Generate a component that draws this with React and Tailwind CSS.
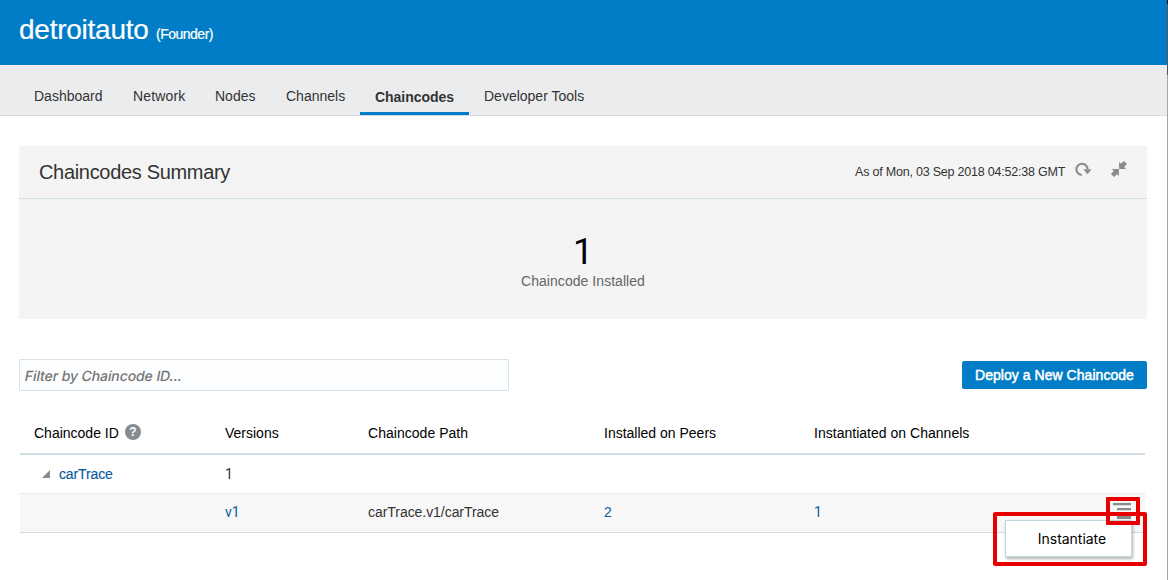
const tabs = [
  { label: "Dashboard", width: "w-[69px]" },
  { label: "Network", width: "w-[52px] tracking-[0.15px]" },
  { label: "Nodes", width: "w-[41px]" },
  { label: "Channels", width: "w-[59px]" },
  { label: "Chaincodes", width: "w-[79px]", active: true },
  { label: "Developer Tools", width: "w-[100px]" },
];

function Text({ children, className = "" }) {
  return <span className={`block whitespace-nowrap ${className}`}>{children}</span>;
}

function RefreshIcon() {
  return (
    <svg width="18" height="16" viewBox="0 0 18 16" className="block">
      <path d="M6.8 12.9 A5.6 5.6 0 1 1 12.6 7.5" fill="none" stroke="#868b8e" strokeWidth="2.1" />
      <path d="M8.3 7.3 H16.4 L12.5 12.2 Z" fill="#868b8e" />
    </svg>
  );
}

function CollapseIcon() {
  return (
    <svg width="16" height="16" viewBox="0 0 16 16" className="block" fill="#868b8e">
      <path d="M8.1 0.9 L10 2.8 L12.8 0 L16 3 L13.2 6 L15.1 7.9 H8.1 Z" />
      <path d="M0.9 8.1 H7.9 V15.1 L6 13.2 L3 16 L0 13 L2.8 10 Z" />
    </svg>
  );
}

const cols = "grid grid-cols-[205px_143px_236px_210px_1fr]";

export default function App() {
  return (
    <div className="relative h-[580px] w-[1168px] overflow-hidden bg-white font-['Liberation_Sans',Arial,sans-serif] text-[14px] text-[#333333]">
      <header className="flex h-[65px] items-baseline bg-[#007dc6] pl-[19px] pt-[11px] text-white">
        <h1 className="w-[137px] text-[28px] leading-[38px] tracking-[-0.25px] [-webkit-text-stroke:0.2px_white]">detroitauto</h1>
        <Text className="text-[14px] tracking-[-0.5px] [-webkit-text-stroke:0.2px_white]">(Founder)</Text>
      </header>
      <nav className="flex h-[51px] border-b border-[#d3dde3] bg-[#ebecee] pl-[19px]">
        {tabs.map((t) => (
          <a
            key={t.label}
            className={
              t.active
                ? "h-[50px] border-b-[3px] border-[#007dc6] px-[15px] pt-[24px] font-bold leading-[16px] tracking-[-0.03px]"
                : "h-[50px] px-[15px] pt-[23px] leading-[16px]"
            }
          >
            <Text className={t.width}>{t.label}</Text>
          </a>
        ))}
      </nav>

      <section className="ml-[19px] mt-[30px] h-[173px] w-[1128px] bg-[#f4f4f4]">
        <div className="flex h-[53px] items-start border-b border-[#cfdee7] pl-5">
          <h2 className="grow pt-[14px] text-[20px] leading-[24px] tracking-[-0.32px]">Chaincodes Summary</h2>
          <Text className="w-[220px] pt-[18px] text-[12.5px] leading-[16px] tracking-[-0.21px]">As of Mon, 03 Sep 2018 04:52:38 GMT</Text>
          <span className="w-[36px] pt-[16px]"><RefreshIcon /></span>
          <span className="mr-5 pt-[15px]"><CollapseIcon /></span>
        </div>
        <div className="flex flex-col items-center pt-[32px]">
          <div className="font-[Roboto,sans-serif] text-[36px] font-normal leading-[42px] text-black">1</div>
          <div className="text-[14px] leading-[16px] tracking-[0.05px] text-[#666666]">Chaincode Installed</div>
        </div>
      </section>

      <div className="ml-[19px] mt-[40px] flex h-8 w-[1128px] justify-between">
        <div className="h-8 w-[490px] rounded-[1px] border border-[#d9e4ea] bg-[#fcfdfe] pl-[5px] pt-[8px] font-[Inter,sans-serif] text-[14px] font-medium leading-[16px] text-[#757575]">
          <span className="inline-block -skew-x-[11deg] tracking-[-0.09px]">Filter by Chaincode ID...</span>
        </div>
        <button className="mt-[2px] h-7 w-[185px] rounded-[2px] bg-[#007dc6] text-[14px] leading-[16px] tracking-[0.04px] text-white [-webkit-text-stroke:0.5px_white]">
          Deploy a New Chaincode
        </button>
      </div>

      <div className="ml-[20px] mt-[25px] w-[1125px]">
        <div className={`${cols} h-[39px] border-b-2 border-[#d2dfe5] text-black`}>
          <div className="flex gap-[6px] pl-[14px] pt-[9px] leading-[16px]">
            <Text className="w-[85px]">Chaincode ID</Text>
            <span className="-mt-px flex h-4 w-4 items-center justify-center rounded-full bg-[#868b8e] text-[12px] font-bold leading-none text-white">?</span>
          </div>
          <Text className="pt-[9px] leading-[16px]">Versions</Text>
          <Text className="pt-[9px] leading-[16px] tracking-[0.03px]">Chaincode Path</Text>
          <Text className="pt-[9px] leading-[16px]">Installed on Peers</Text>
          <Text className="pt-[9px] leading-[16px] tracking-[0.02px]">Instantiated on Channels</Text>
        </div>
        <div className={`${cols} h-[39px] border-b border-[#e9ebec]`}>
          <div className="flex gap-[9px] pl-[22px] pt-[11px] leading-[16px] text-[#0b5a9d]">
            <svg width="8" height="8" viewBox="0 0 8 8" className="mt-1"><path d="M8 0V8H0Z" fill="#868b8e" /></svg>
            <Text className="tracking-[-0.13px] [-webkit-text-stroke:0.15px_#0b5a9d]">carTrace</Text>
          </div>
          <Text className="pt-[11px] font-[Roboto,sans-serif] leading-[16px]">1</Text>
        </div>
        <div className={`${cols} h-[39px] border-b border-[#cfdde4] bg-[#f7f7f7] leading-[16px] text-[#0b5a9d]`}>
          <span />
          <Text className="pt-[10px] font-[Roboto,sans-serif]">v1</Text>
          <Text className="pt-[10px] tracking-[-0.05px] text-[#333333]">carTrace.v1/carTrace</Text>
          <Text className="pt-[10px]">2</Text>
          <Text className="pt-[10px] font-[Roboto,sans-serif]">1</Text>
        </div>
      </div>

      <svg className="absolute left-[1113px] top-[503px]" width="18" height="16" fill="#868b8e">
        <path d="M0 0h18v2.3H0zM4 5h14v2.3H4zM4 13h14v3H4z" />
      </svg>
      <div className="absolute left-[1005px] top-[520px] h-[37px] w-[127px] border border-[#c3d5df] bg-white pt-[10px] text-center font-[Inter,sans-serif] text-[14px] leading-[16px] text-black shadow-[1px_2px_3px_rgba(0,0,0,0.3)]">
        <span className="ml-[7px] tracking-[-0.03px]">Instantiate</span>
      </div>
      <div className="absolute left-[993px] top-[512px] h-[54px] w-[154px] rounded-[2px] border-4 border-[#e80000]" />
      <div className="absolute left-[1106px] top-[497px] h-[28px] w-[34px] rounded-[1px] border-4 border-[#e80000]" />
      <div className="absolute right-0 top-0 flex h-[580px] w-px flex-col bg-[#a5a5a5]">
        <span className="h-1 bg-[#111111]" />
        <span className="h-[71px] bg-[#555555]" />
      </div>
    </div>
  );
}
